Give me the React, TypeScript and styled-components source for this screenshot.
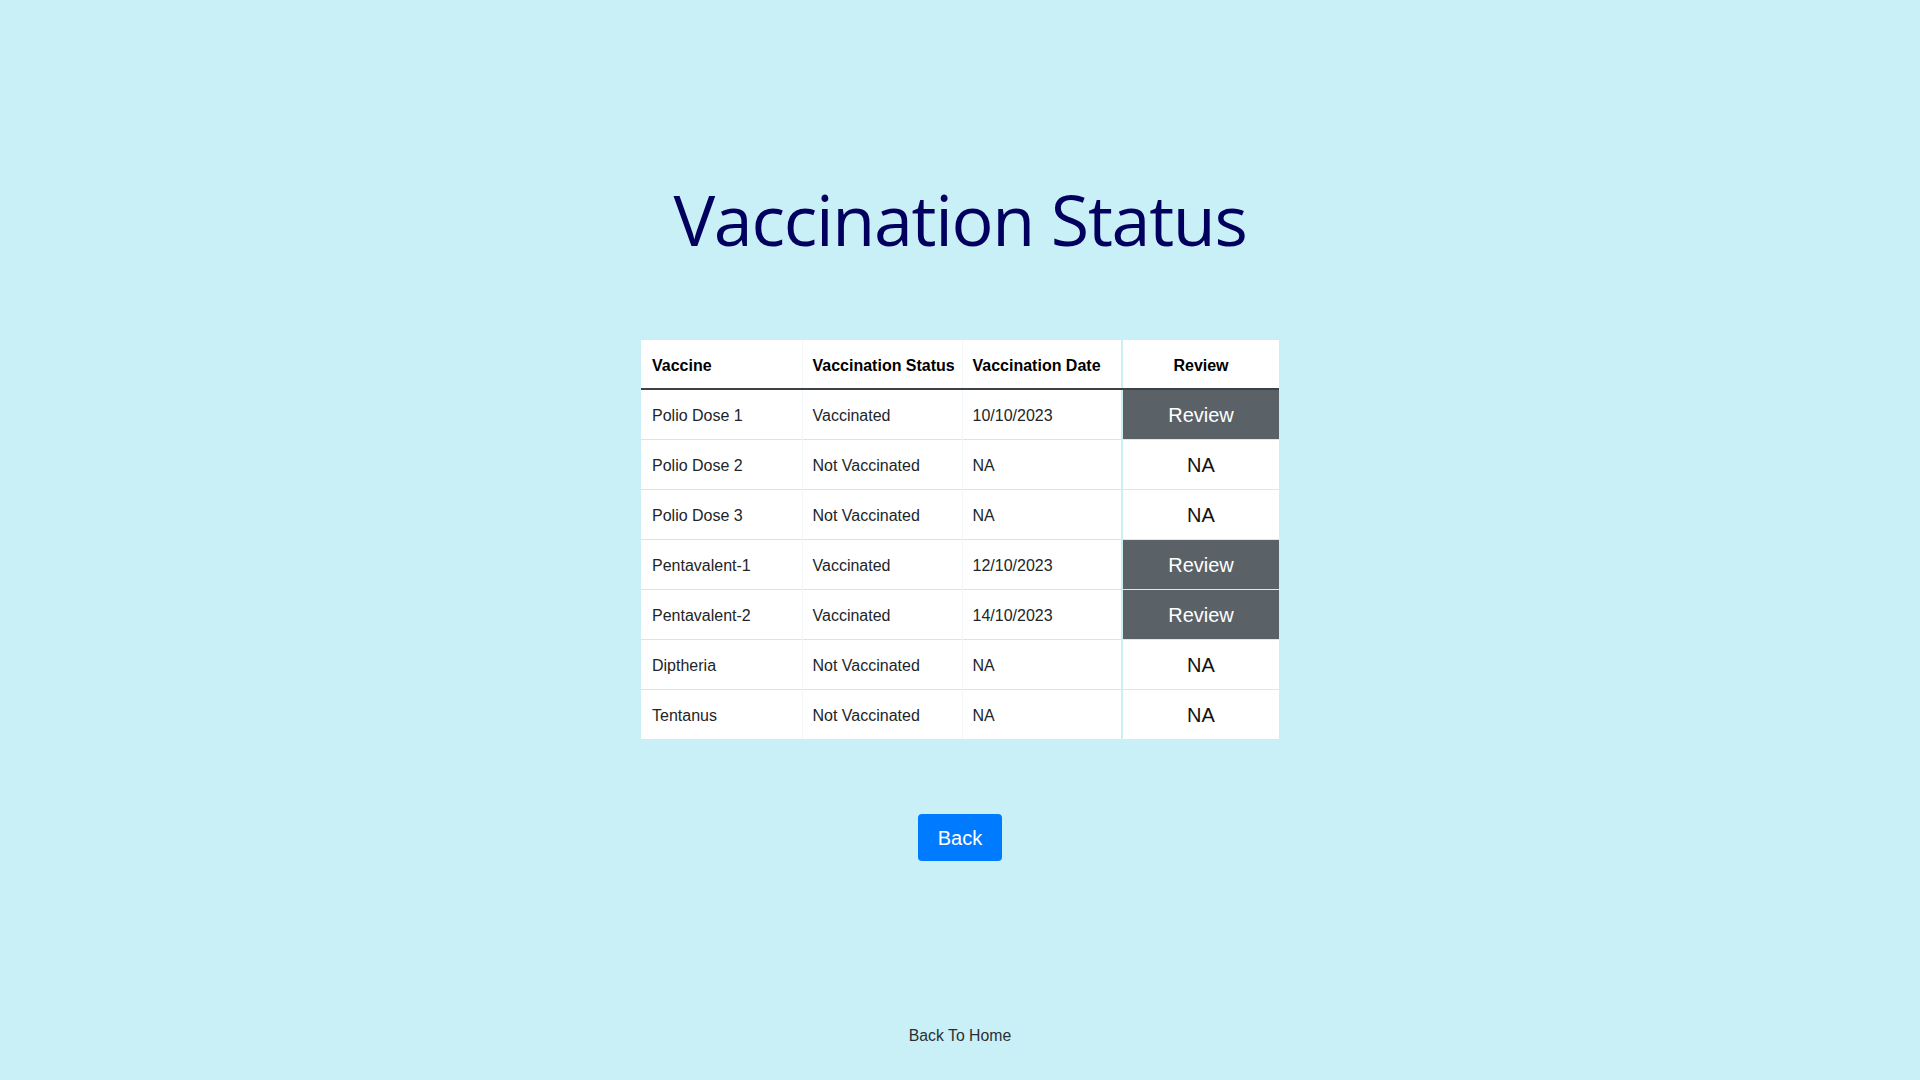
import styled, { createGlobalStyle } from "styled-components";

const GlobalStyle = createGlobalStyle`
  html, body {
    margin: 0;
    padding: 0;
    background: #c9f0f7;
  }
  body {
    font-family: "Liberation Sans", Arial, sans-serif;
    color: #212529;
  }
`;

const Page = styled.div`
  min-height: 100vh;
  display: flex;
  flex-direction: column;
  align-items: center;
  padding-top: 177px;
  box-sizing: border-box;
`;

const Title = styled.h1`
  margin: 0;
  font: 400 70px/84px "Open Sans", "Noto Sans", sans-serif;
  letter-spacing: -1.3px;
  color: #02005f;
`;

const Table = styled.table`
  margin-top: 79px;
  width: 638px;
  table-layout: fixed;
  border-collapse: collapse;
  background: #fff;
  font-size: 16px;
  color: #212529;
`;

const HeadCell = styled.th<{ $center?: boolean }>`
  height: 45px;
  padding: 3px 10px 0;
  white-space: nowrap;
  text-align: ${({ $center }) => ($center ? "center" : "left")};
  font-weight: 700;
  color: #000;
  border-bottom: 2px solid #3d4247;
  border-left: ${({ $center }) => ($center ? "2px solid #c9f0f7" : "1px solid #f5f6f7")};
  &:first-child {
    border-left: none;
    padding-left: 11px;
  }
`;

const Row = styled.tr<{ $first?: boolean }>`
  height: 50px;
  td {
    border-top: ${({ $first }) => ($first ? "none" : "1px solid #dee2e6")};
  }
`;

const Cell = styled.td`
  padding: 3px 10px 0;
  white-space: nowrap;
  border-left: 1px solid #f5f6f7;
  &:first-child {
    border-left: none;
    padding-left: 11px;
  }
`;

const ReviewCell = styled.td<{ $dark: boolean }>`
  padding: 2px 0 0;
  text-align: center;
  font-size: 20px;
  border-left: 2px solid #c9f0f7;
  ${Row} > & {
    border-top-color: #c9f0f7;
  }
  background: ${({ $dark }) => ($dark ? "#5a6268" : "#fff")};
  color: ${({ $dark }) => ($dark ? "#fff" : "#111")};
  cursor: ${({ $dark }) => ($dark ? "pointer" : "default")};
`;

const BackButton = styled.button`
  margin-top: 75px;
  width: 84px;
  height: 47px;
  border: none;
  border-radius: 4px;
  background: #007bff;
  color: #fff;
  font: 400 20px/1.5 "Liberation Sans", Arial, sans-serif;
  cursor: pointer;
`;

const HomeLink = styled.a`
  margin-top: 163px;
  font-size: 15.8px;
  line-height: 24px;
  color: #2b2f33;
  text-decoration: none;
  cursor: pointer;
`;

type Vaccine = {
  name: string;
  status: string;
  date: string;
};

const vaccines: Vaccine[] = [
  { name: "Polio Dose 1", status: "Vaccinated", date: "10/10/2023" },
  { name: "Polio Dose 2", status: "Not Vaccinated", date: "NA" },
  { name: "Polio Dose 3", status: "Not Vaccinated", date: "NA" },
  { name: "Pentavalent-1", status: "Vaccinated", date: "12/10/2023" },
  { name: "Pentavalent-2", status: "Vaccinated", date: "14/10/2023" },
  { name: "Diptheria", status: "Not Vaccinated", date: "NA" },
  { name: "Tentanus", status: "Not Vaccinated", date: "NA" },
];

const App = () => {
  return (
    <>
      <GlobalStyle />
      <Page>
        <Title>Vaccination Status</Title>
        <Table>
          <colgroup>
            <col style={{ width: 161 }} />
            <col style={{ width: 160 }} />
            <col style={{ width: 160 }} />
            <col style={{ width: 157 }} />
          </colgroup>
          <thead>
            <tr>
              <HeadCell>Vaccine</HeadCell>
              <HeadCell>Vaccination Status</HeadCell>
              <HeadCell>Vaccination Date</HeadCell>
              <HeadCell $center>Review</HeadCell>
            </tr>
          </thead>
          <tbody>
            {vaccines.map((v, i) => {
              const done = v.status === "Vaccinated";
              return (
                <Row key={v.name} $first={i === 0}>
                  <Cell>{v.name}</Cell>
                  <Cell>{v.status}</Cell>
                  <Cell>{v.date}</Cell>
                  <ReviewCell $dark={done}>{done ? "Review" : "NA"}</ReviewCell>
                </Row>
              );
            })}
          </tbody>
        </Table>
        <BackButton>Back</BackButton>
        <HomeLink>Back To Home</HomeLink>
      </Page>
    </>
  );
};

export default App;
